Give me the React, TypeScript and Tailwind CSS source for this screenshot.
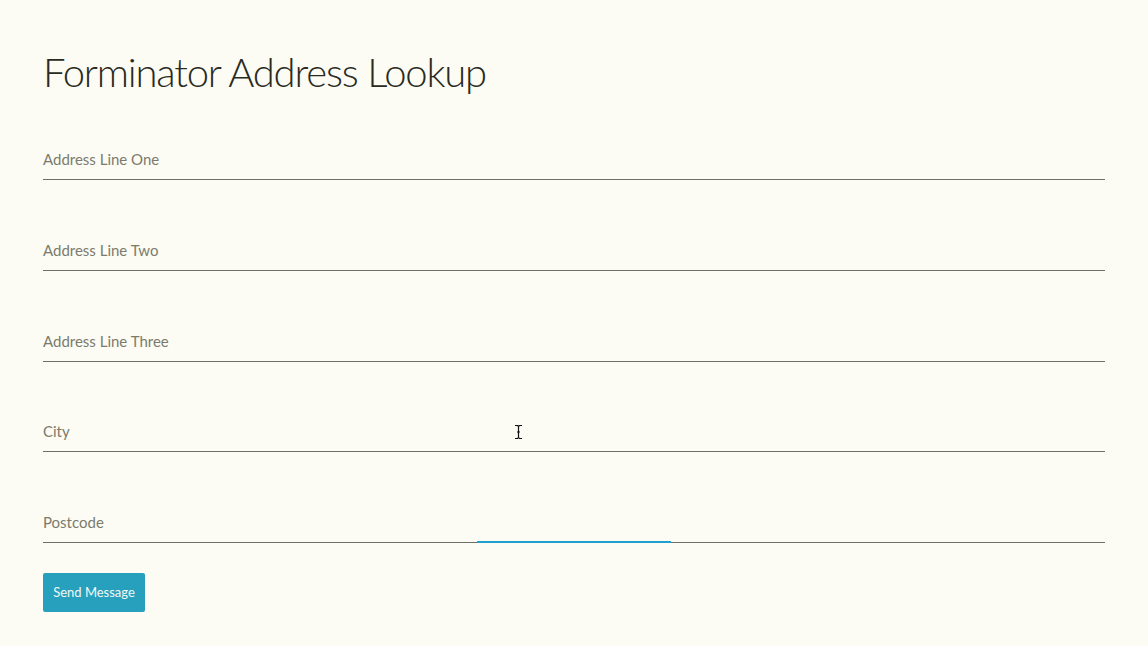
import React from "react";

const fields = [
  "Address Line One",
  "Address Line Two",
  "Address Line Three",
  "City",
  "Postcode",
];

export default function App() {
  return (
    <div
      className="relative w-[1148px] h-[646px] overflow-hidden bg-[#fcfcf4] text-[#2b2b22]"
      style={{ fontFamily: "Lato, 'Open Sans', sans-serif" }}
    >
      <div className="pl-[43px] pr-[43px] pt-[47px]">
        <h1 className="text-[40px] leading-[50px] font-light tracking-[-1.2px] text-[#2a2a1e]">
          Forminator Address Lookup
        </h1>
        <div className="mt-[39px]">
          {fields.map((f, i) => (
            <div
              key={f}
              className={`relative flex items-end border-b border-[#6f6f66] ${
                i === 0 ? "h-[44px]" : "h-[90.75px]"
              }`}
            >
              <span className="pb-[10px] text-[15px] leading-[20px] text-[#7b7b6c]">
                {f}
              </span>
              {f === "Postcode" && (
                <span className="absolute left-[434px] bottom-[-1px] h-[2px] w-[194px] bg-[#1fa0cf]" />
              )}
            </div>
          ))}
        </div>
        <button className="mt-[30px] h-[39px] w-[102px] rounded-[2px] bg-[#27a0bd] text-[13px] text-[#f2f8f4]">
          Send Message
        </button>
      </div>
      <svg
        className="absolute left-[514px] top-[424px]"
        width="9"
        height="16"
        viewBox="0 0 9 16"
      >
        <path
          d="M1 1.5h2.5L4.5 2.5L5.5 1.5H8M4.5 2.5V13.5M1 14.5h2.5L4.5 13.5L5.5 14.5H8M3 8h3"
          stroke="#111"
          strokeWidth="1.2"
          fill="none"
        />
      </svg>
    </div>
  );
}
